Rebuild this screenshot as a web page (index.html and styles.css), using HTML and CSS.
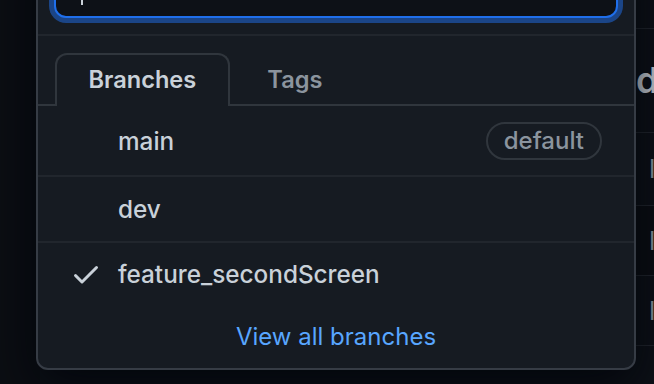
FILE: index.html
```html
<!DOCTYPE html>
<html>
<head>
<meta charset="utf-8">
<link rel="stylesheet" href="styles.css">
</head>
<body>
<div class="page">
  <div class="backdrop">
    <div class="gutter"></div>
    <div class="files">
      <div class="frow r0"></div>
      <div class="frow r1"><span class="ftext big">d</span></div>
      <div class="frow r2"><span class="ftext">l</span></div>
      <div class="frow r3"><span class="ftext">l</span></div>
      <div class="frow r4"><span class="ftext">l</span></div>
      <div class="frow r5"></div>
    </div>
  </div>

  <div class="menu">
    <div class="filter">
      <div class="input"><span class="caret"></span></div>
    </div>
    <div class="tabs">
      <div class="tab active">Branches</div>
      <div class="tab">Tags</div>
    </div>
    <div class="list">
      <div class="item row-main">
        <span class="check"></span>
        <span class="name">main</span>
        <span class="badge">default</span>
      </div>
      <div class="item row-dev">
        <span class="check"></span>
        <span class="name">dev</span>
      </div>
      <div class="item row-feature">
        <span class="check">
          <svg viewBox="0 0 16 16" width="32" height="32"><path fill="#c9d1d9" d="M13.78 4.22a.75.75 0 0 1 0 1.06l-7.25 7.25a.75.75 0 0 1-1.06 0L2.22 9.28a.751.751 0 0 1 .018-1.042.751.751 0 0 1 1.042-.018L6 10.94l6.72-6.72a.75.75 0 0 1 1.06 0Z"/></svg>
        </span>
        <span class="name">feature_secondScreen</span>
      </div>
    </div>
    <div class="footer"><span class="link">View all branches</span></div>
  </div>
</div>
</body>
</html>
```
FILE: styles.css
```css
* { box-sizing: border-box; }
html, body { margin: 0; padding: 0; }
body {
  background: #0d1117;
  font-family: Inter, "Noto Sans", sans-serif;
  color: #c9d1d9;
  overflow: hidden;
}
.page {
  position: relative;
  width: 654px;
  height: 384px;
  overflow: hidden;
}

/* background page behind the dropdown */
.backdrop { display: flex; height: 384px; }
.gutter { width: 40px; flex: none; background: #0b0e13; }
.files { flex: 1; display: flex; flex-direction: column; overflow: hidden; }
.frow {
  display: flex;
  align-items: center;
  padding-left: 609px;
  border-top: 1px solid #21262d;
  white-space: nowrap;
}
.r0 { height: 29px; border-top: none; }
.r1 { height: 107px; padding-left: 596px; }
.r2 { height: 76px; }
.r3 { height: 72px; background: #0b0e13; }
.r4 { height: 73px; }
.r5 { height: 40px; }
.ftext { font-size: 26px; color: #8b949e; flex: none; }
.ftext.big { font-size: 36px; font-weight: 600; color: #c9d1d9; }

/* dropdown */
.menu {
  position: absolute;
  left: 36px;
  top: -64px;
  width: 600px;
  background: #161b22;
  border: 2px solid #363c45;
  border-radius: 12px;
  box-shadow: 0 16px 48px rgba(1, 4, 9, 0.85);
  overflow: hidden;
}
.filter {
  padding: 16px;
  border-bottom: 2px solid #21262d;
}
.input {
  height: 64px;
  background: #0d1117;
  border: 2px solid #1f6feb;
  border-radius: 12px;
  box-shadow: 0 0 0 5px rgba(31, 111, 235, 0.5);
  display: flex;
  align-items: center;
  padding-left: 25px;
}
.caret {
  width: 2px;
  height: 38px;
  background: #c9d1d9;
}
.tabs {
  display: flex;
  padding: 17px 17px 0;
  border-bottom: 2px solid #30363d;
}
.tab {
  height: 53px;
  margin-bottom: -2px;
  padding: 0 31.5px;
  border: 2px solid transparent;
  border-bottom: none;
  border-radius: 12px 12px 0 0;
  font-size: 23.6px;
  font-weight: 600;
  line-height: 50px;
  color: #8b949e;
}
.tab + .tab { margin-left: 4px; }
.tab.active {
  background: #161b22;
  border-color: #30363d;
  color: #c9d1d9;
}

.item {
  display: flex;
  align-items: center;
  padding: 0 32px;
  font-size: 24.3px;
  font-weight: 500;
}
.row-main { height: 71px; border-bottom: 2px solid #21262d; }
.row-dev { height: 66px; border-bottom: 2px solid #21262d; }
.row-feature { height: 62px; }
.check {
  width: 32px;
  height: 32px;
  margin-right: 16px;
  display: flex;
}
.name { color: #c9d1d9; }
.badge {
  margin-left: auto;
  height: 38px;
  padding: 0 16px;
  border: 2px solid #30363d;
  border-radius: 999px;
  display: flex;
  align-items: center;
  font-size: 24px;
  font-weight: 500;
  color: #8b949e;
}
.footer {
  height: 63px;
  display: flex;
  align-items: center;
  justify-content: center;
}
.link {
  font-size: 24px;
  color: #58a6ff;
}
```
